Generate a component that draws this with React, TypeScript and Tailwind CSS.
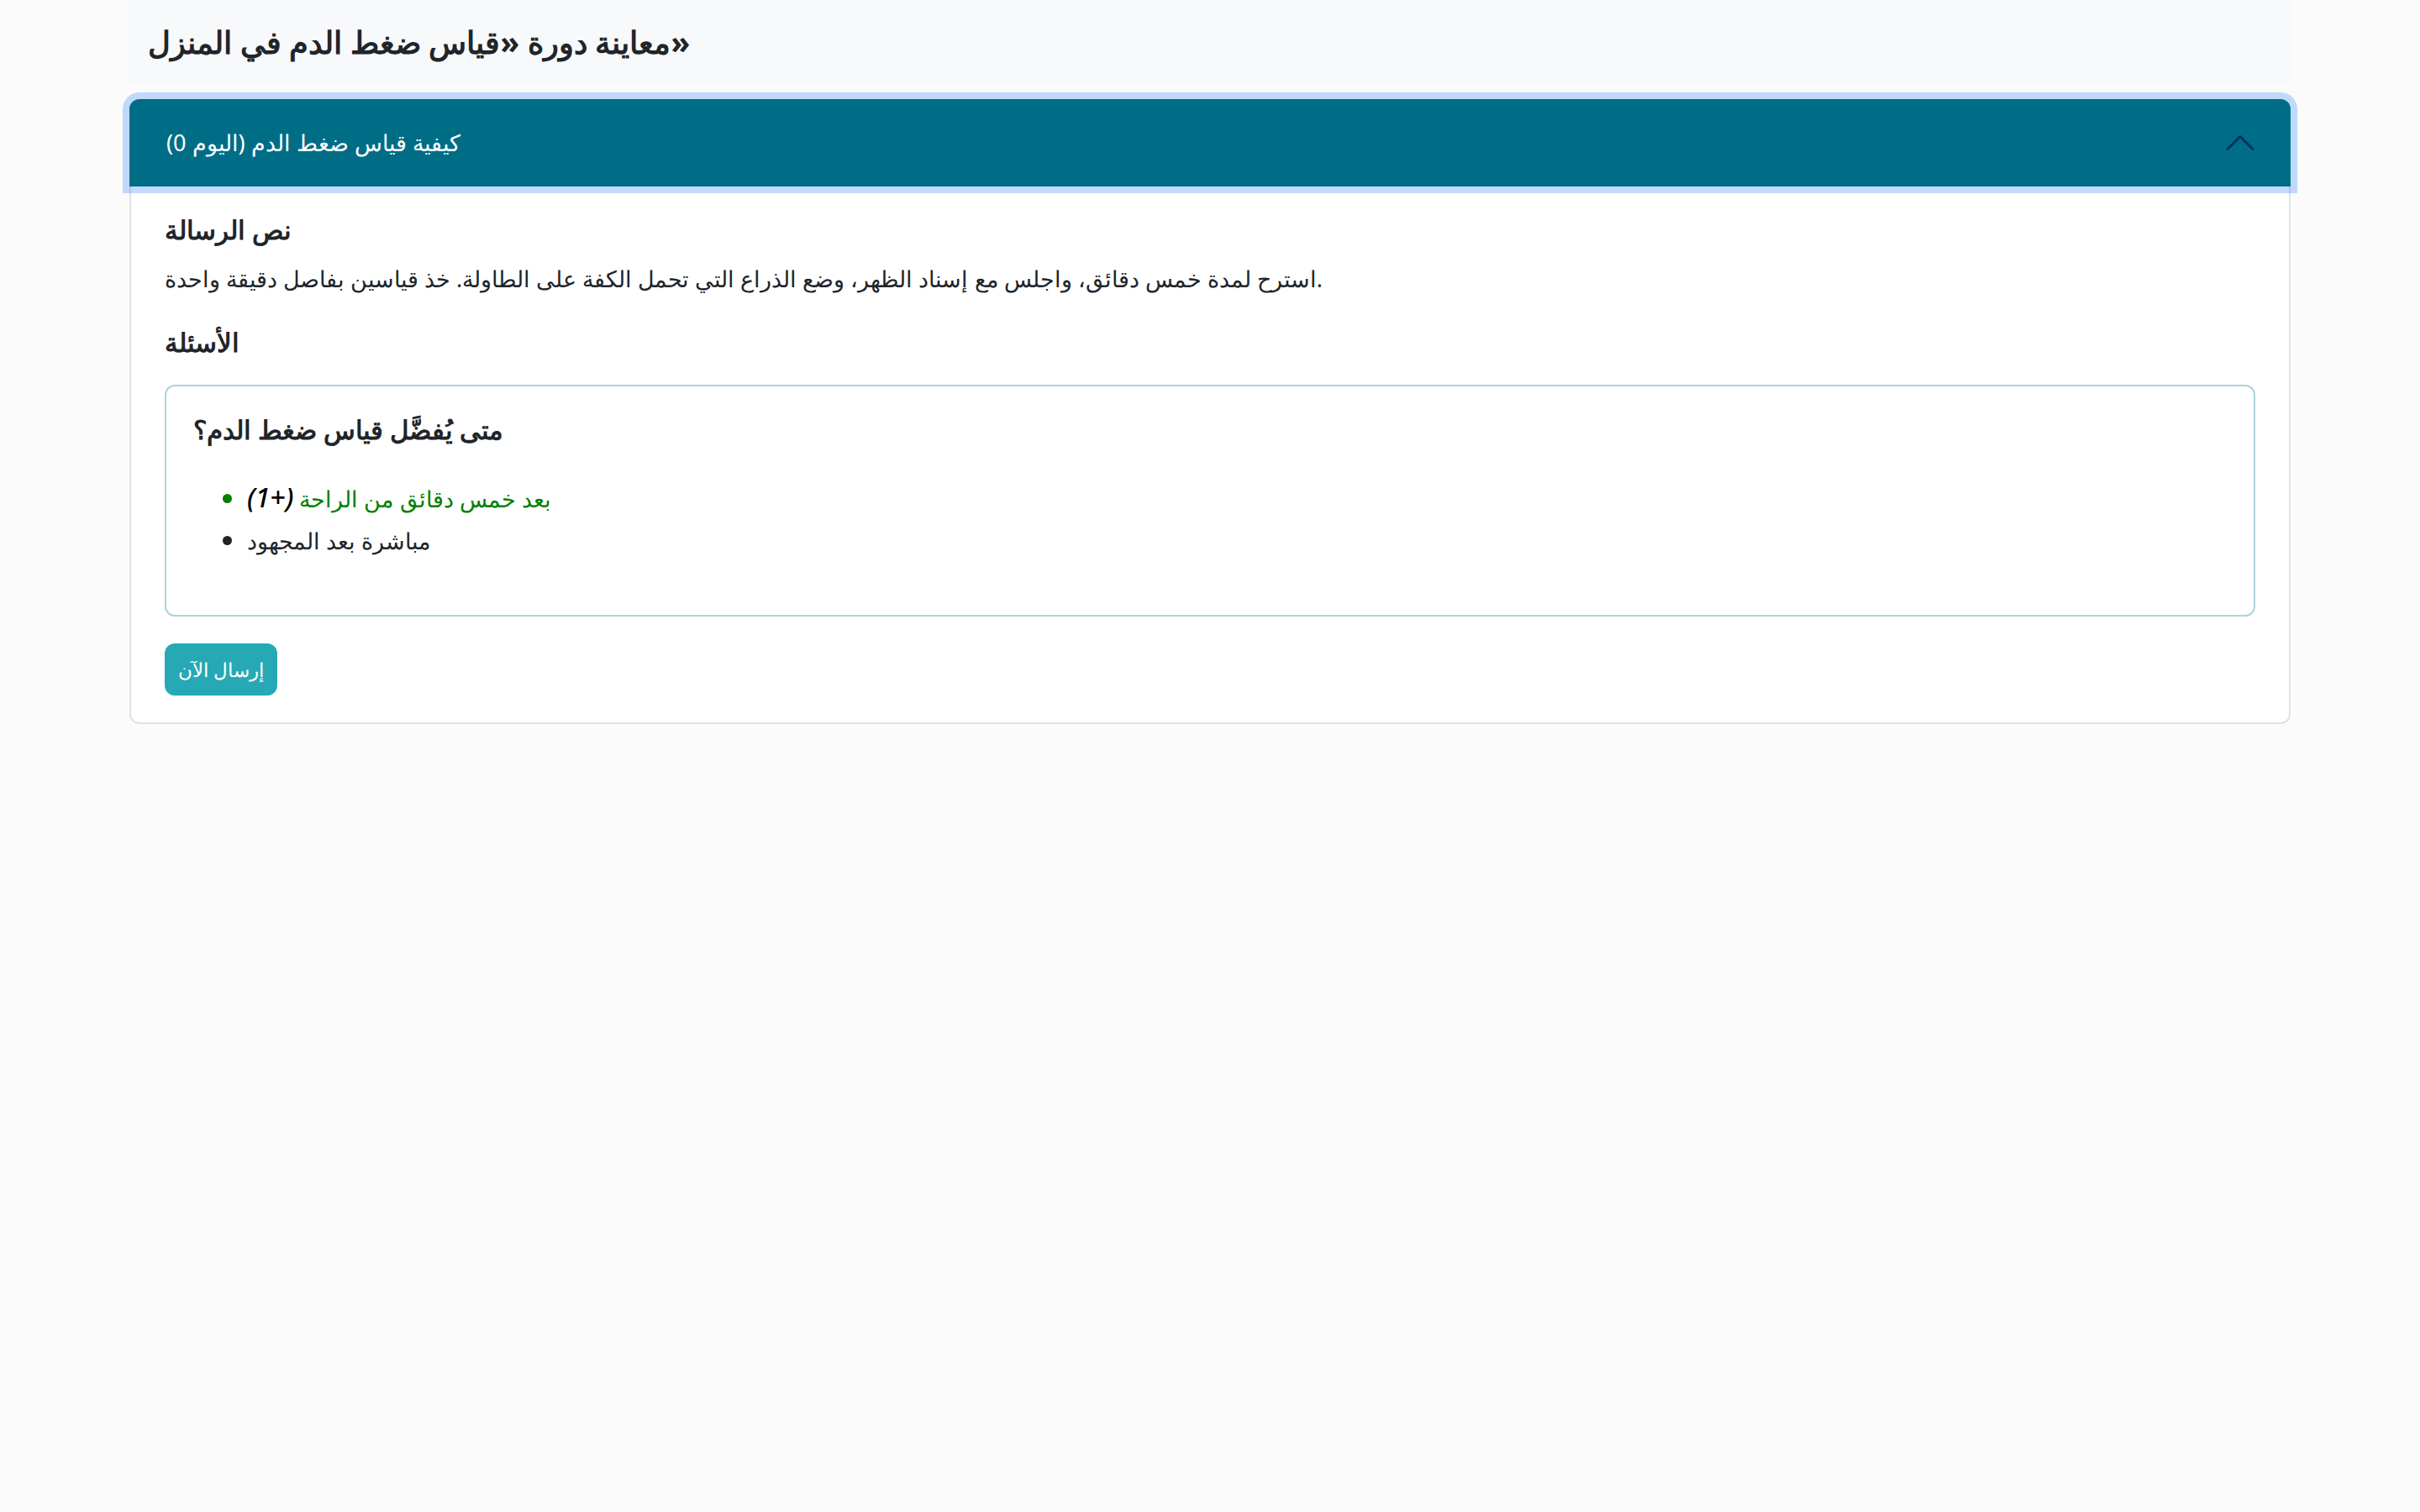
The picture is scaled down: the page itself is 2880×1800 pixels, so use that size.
import React from "react";

function ChevronUp() {
  return (
    <svg
      viewBox="0 0 16 16"
      width="40"
      height="40"
      fill="none"
      stroke="#052c65"
      strokeLinecap="round"
      strokeLinejoin="round"
      strokeWidth="1.2"
    >
      <path d="M2 11L8 5L14 11" />
    </svg>
  );
}

export default function App() {
  return (
    <div className="min-h-screen bg-[#fbfbfb] text-[#212529] font-[system-ui,-apple-system,Segoe_UI,Roboto,Helvetica_Neue,Noto_Sans,Liberation_Sans,Arial,sans-serif] text-[27px] leading-[48px]">
      <div className="mx-auto w-[2576px]">
        <div className="flex h-[100px] items-center bg-[#f8f9fa] px-6">
          <h4 className="text-[37px] font-bold leading-[48px]">
            معاينة دورة «قياس ضغط الدم في المنزل»
          </h4>
        </div>

        <div className="mx-[2px] mt-[18px] rounded-xl border-2 border-[#dee2e6] bg-white">
          <div className="relative z-10 -mx-[2px] -mt-[2px] flex h-[104px] items-center justify-between rounded-t-xl bg-[#006d87] pl-[44px] pr-10 text-white shadow-[0_0_0_8px_rgba(13,110,253,0.25)]">
            <span>كيفية قياس ضغط الدم (اليوم 0)</span>
            <ChevronUp />
          </div>

          <div className="px-10 py-8">
            <h6 className="mb-4 text-[31px] font-bold leading-[38px]">نص الرسالة</h6>
            <p className="mb-8">
              استرح لمدة خمس دقائق، واجلس مع إسناد الظهر، وضع الذراع التي تحمل الكفة على الطاولة. خذ قياسين بفاصل دقيقة واحدة.
            </p>
            <h6 className="mb-8 text-[31px] font-bold leading-[38px]">الأسئلة</h6>

            <div className="mb-8 rounded-xl border-2 border-[#add3dc] p-8">
              <h6 className="mb-[38px] text-[31px] font-bold leading-[38px]">
                متى يُفضَّل قياس ضغط الدم؟
              </h6>
              <ul className="mb-8 list-disc pl-16">
                <li className="text-[#008000] marker:text-[32px]">
                  <bdi className="text-[32px] font-medium italic text-[#000]">(1+)</bdi>{" "}
                  <bdi>بعد خمس دقائق من الراحة</bdi>
                </li>
                <li className="marker:text-[32px]">مباشرة بعد المجهود</li>
              </ul>
            </div>

            <button className="h-[62px] rounded-xl bg-[#26a9b5] px-4 text-[23px] leading-[1.5] text-white">
              إرسال الآن
            </button>
          </div>
        </div>
      </div>
    </div>
  );
}
